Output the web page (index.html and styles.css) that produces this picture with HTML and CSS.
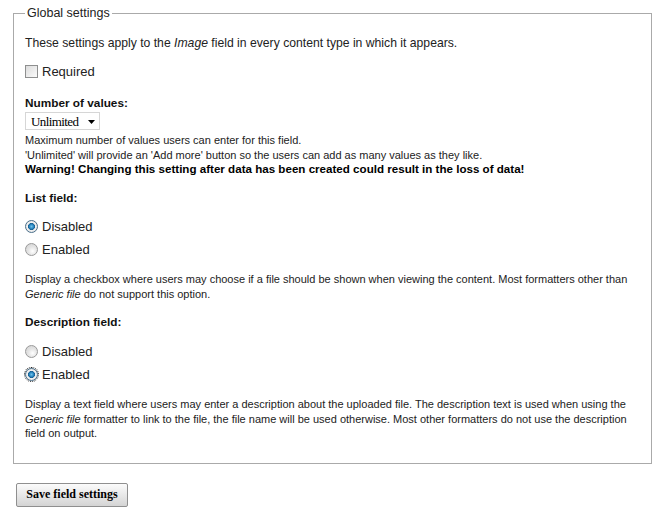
FILE: index.html
```html
<!DOCTYPE html>
<html>
<head>
<meta charset="utf-8">
<link rel="stylesheet" href="styles.css">
</head>
<body>
<form class="form">
  <fieldset class="group">
    <legend class="legend">Global settings</legend>
    <p class="intro">These settings apply to the <em>Image</em> field in every content type in which it appears.</p>

    <label class="option req">
      <span class="check"></span>Required
    </label>

    <div class="item">
      <div class="label">Number of values:</div>
      <span class="select-wrap">
        <select class="select"><option>Unlimited</option></select>
        <svg class="caret" width="8" height="4" viewBox="0 0 8 4"><path d="M0 0H7L3.5 4Z" fill="#000"/></svg>
      </span>
      <div class="desc first">Maximum number of values users can enter for this field.</div>
      <div class="desc second">'Unlimited' will provide an 'Add more' button so the users can add as many values as they like.</div>
      <div class="warn">Warning! Changing this setting after data has been created could result in the loss of data!</div>
    </div>

    <div class="item">
      <div class="label spaced">List field:</div>
      <label class="option"><span class="radio on"></span>Disabled</label>
      <label class="option"><span class="radio"></span>Enabled</label>
      <div class="desc para">Display a checkbox where users may choose if a file should be shown when viewing the content. Most formatters other than <em>Generic file</em> do not support this option.</div>
    </div>

    <div class="item">
      <div class="label spaced alt">Description field:</div>
      <label class="option"><span class="radio"></span>Disabled</label>
      <label class="option"><span class="radio on focus"></span>Enabled</label>
      <div class="desc para">Display a text field where users may enter a description about the uploaded file. The description text is used when using the <em>Generic file</em> formatter to link to the file, the file name will be used otherwise. Most other formatters do not use the description field on output.</div>
    </div>
  </fieldset>

  <button type="button" class="btn">Save field settings</button>
</form>
</body>
</html>
```
FILE: styles.css
```css
html, body {
  margin: 0;
  padding: 0;
  background: #fff;
}
body {
  font-family: "Liberation Sans", Arial, sans-serif;
  color: #222;
  font-size: 13px;
}
.form {
  padding: 6px 14px 0 13px;
}
.group {
  margin: 0;
  border: 1px solid #aaa;
  border-radius: 0;
  padding: 10px 11px 22px 11px;
}
.legend {
  padding: 0 2px;
  margin-left: 0;
  font-size: 12.5px;
}
.intro {
  margin: 5px 0 0;
  line-height: 16px;
  font-size: 12.2px;
}
.option {
  display: flex;
  align-items: center;
  height: 17px;
  line-height: 17px;
  margin-top: 6px;
}
.req {
  margin-top: 12px;
}
.check {
  width: 11px;
  height: 11px;
  border: 1px solid #8e8f8f;
  background: linear-gradient(135deg, #dcdcdc, #fbfbfb);
  margin: 0 4px 0 0;
  box-sizing: content-box;
}
.radio {
  width: 11px;
  height: 11px;
  border-radius: 50%;
  border: 1px solid #9a9a9a;
  background: radial-gradient(circle at 60% 65%, #fff 0, #e4e4e4 45%, #cfcfcf 100%);
  margin: 0 4px 0 0;
  position: relative;
  box-sizing: content-box;
}
.radio.on {
  background: radial-gradient(circle at 50% 50%, #6fc3ec 0, #1f7cb8 2.5px, #1a5f90 3.2px, #f2f2f2 3.8px, #dadada 100%);
  border-color: #4a6f8a;
}
.radio.focus {
  outline: 1px dotted #222;
  outline-offset: 0;
}
.label {
  font-weight: bold;
  font-size: 11.8px;
  margin-top: 16px;
  line-height: 15px;
  color: #111;
}
.label.spaced {
  margin-top: 16px;
  margin-bottom: 12px;
}
.label.alt {
  margin-top: 14px;
  margin-bottom: 13px;
}
.select-wrap {
  position: relative;
  display: inline-block;
  margin-top: 1px;
}
.select {
  appearance: none;
  -webkit-appearance: none;
  font-family: "Liberation Serif", "Times New Roman", serif;
  font-size: 13px;
  letter-spacing: -0.6px;
  color: #000;
  width: 75px;
  height: 18px;
  padding: 0 0 0 5px;
  border: 1px solid #d6d6d6;
  border-radius: 0;
  background: #fff;
  display: block;
}
.caret {
  position: absolute;
  right: 4px;
  top: 8px;
}
.desc {
  font-size: 11px;
  line-height: 14px;
}
.desc.first {
  margin-top: 3px;
}
.desc.second {
  margin-top: 1px;
}
.para {
  margin-top: 14px;
  line-height: 14.5px;
}
.warn {
  font-size: 11.6px;
  font-weight: bold;
  line-height: 13px;
  color: #000;
}
.btn {
  margin: 19px 0 0 3px;
  width: 112px;
  height: 24px;
  border: 1px solid #8f8f8f;
  border-radius: 2px;
  background: linear-gradient(#fbfbfb, #e4e4e4 60%, #d4d4d4);
  font-family: "Liberation Serif", "Times New Roman", serif;
  font-weight: bold;
  font-size: 12px;
  color: #000;
  padding: 0;
}
```
